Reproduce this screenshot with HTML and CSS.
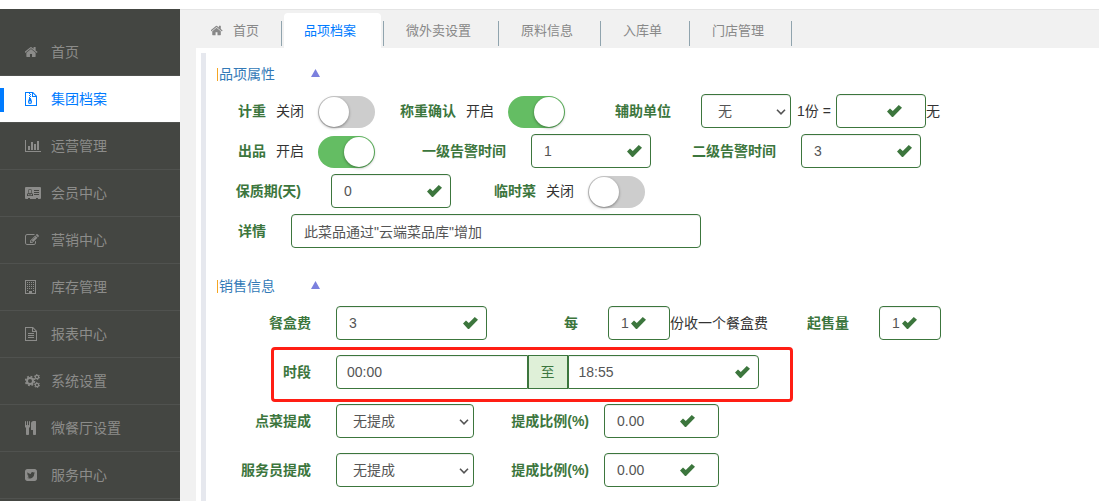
FILE: index.html
```html
<!DOCTYPE html>
<html lang="zh-CN">
<head>
<meta charset="utf-8">
<title>品项档案</title>
<link rel="stylesheet" href="styles.css">
</head>
<body>
<svg class="defs" aria-hidden="true">
  <symbol id="home" viewBox="88 0 1616 1792" preserveAspectRatio="none"><path d="M1408 992v480q0 26-19 45t-45 19h-384v-384h-256v384h-384q-26 0-45-19t-19-45v-480q0-1 .5-3t.5-3l575-474 575 474q1 2 1 6zm223-69l-62 74q-8 9-21 11h-3q-13 0-21-7l-692-577-692 577q-12 8-24 7-13-2-21-11l-62-74q-8-10-7-23.5t11-21.5l719-599q32-26 76-26t76 26l244 204v-195q0-14 9-23t23-9h192q14 0 23 9t9 23v408l219 182q10 8 11 21.5t-7 23.5z"/></symbol>
  <symbol id="check" viewBox="0 0 15 12"><path d="M0 6.500L3 3.500L5.800 6L11.800 0L15 2.800L6 12H5Z"/></symbol>
  <symbol id="caret" viewBox="0 0 10 6"><path d="M1 .8L5 4.800L9 .8" fill="none" stroke="currentColor" stroke-width="1.600"/></symbol>
</svg>
<div class="app">
  <nav class="sidebar">
    <a href="#" class="item"><svg width="13" height="14"><use href="#home"/></svg>首页</a>
    <a href="#" class="item active"><svg width="12" height="14" viewBox="0 0 12 14"><path fill-rule="evenodd" d="M0 0H8L12 4V14H0ZM1 1V13H11V5H7V1ZM8 1.400V4H10.600Z"/><path d="M4 1h1v1H4zM5 2h1v1H5zM4 3h1v1H4zM5 4h1v1H5zM4 5h1v1H4zM4.200 6h1.600L7 9.500Q7.200 12 5 12T3 9.500Z"/><path class="hole" d="M4 9.500h2v1H4z"/></svg>集团档案</a>
    <a href="#" class="item"><svg width="16" height="14" viewBox="0 0 2048 1792"><path d="M640 896v512h-256v-512h256zm384-512v1024h-256v-1024h256zm1024 1152v128h-2048v-1536h128v1408h1920zm-640-896v768h-256v-768h256zm384-384v1152h-256v-1152h256z"/></svg>运营管理</a>
    <a href="#" class="item"><svg width="16" height="14" viewBox="0 0 16 14"><path fill-rule="evenodd" d="M1 1H15Q16 1 16 2V12Q16 13 15 13H13V12H11V13H5V12H3V13H1Q0 13 0 12V2Q0 1 1 1ZM2 10H8V8.500Q8 7 6.500 7Q7 6 7 5Q7 3 5 3T3 5Q3 6 3.500 7Q2 7 2 8.500ZM9 4V5H14V4ZM9 6V7H14V6ZM9 8V9H14V8Z"/><path d="M3.700 3.700h2.600v2.800L5 7.500L3.700 6.500zM3 7.700L5 8.700L7 7.700V9.300H3Z"/></svg>会员中心</a>
    <a href="#" class="item"><svg width="14" height="14" viewBox="0 0 1792 1792"><path d="M888 1184l116-116-152-152-116 116v56h96v96h56zm440-720q-16-16-33 1l-350 350q-17 17-1 33t33-1l350-350q17-17 1-33zm80 594v190q0 119-84.500 203.500t-203.500 84.500h-832q-119 0-203.500-84.500t-84.500-203.500v-832q0-119 84.500-203.500t203.500-84.500h832q63 0 117 25 15 7 18 23 3 17-9 29l-49 49q-14 14-32 8-23-6-45-6h-832q-66 0-113 47t-47 113v832q0 66 47 113t113 47h832q66 0 113-47t47-113v-126q0-13 9-22l64-64q15-15 35-7t20 29zm-96-738l288 288-672 672h-288v-288zm444 132l-92 92-288-288 92-92q28-28 68-28t68 28l152 152q28 28 28 68t-28 68z"/></svg>营销中心</a>
    <a href="#" class="item"><svg width="11" height="14" viewBox="0 0 11 14"><path fill-rule="evenodd" d="M0 0H11V14H0ZM1 1V13H4V11H7V13H10V1Z"/><path d="M2 2h1v1H2zM4 2h1v1H4zM6 2h1v1H6zM8 2h1v1H8zM2 4h1v1H2zM4 4h1v1H4zM6 4h1v1H6zM8 4h1v1H8zM2 6h1v1H2zM4 6h1v1H4zM6 6h1v1H6zM8 6h1v1H8zM2 8h1v1H2zM4 8h1v1H4zM6 8h1v1H6zM8 8h1v1H8zM2 10h1v1H2zM8 10h1v1H8z"/></svg>库存管理</a>
    <a href="#" class="item"><svg width="12" height="14" viewBox="0 0 12 14"><path fill-rule="evenodd" d="M0 0H8L12 4V14H0ZM1 1V13H11V5H7V1ZM8 1.400V4H10.600ZM3 6H9V7H3ZM3 8H9V9H3ZM3 10H9V11H3Z"/></svg>报表中心</a>
    <a href="#" class="item"><svg width="15" height="14" viewBox="0 0 15 14"><circle cx="5" cy="7" r="3" fill="none" stroke="currentColor" stroke-width="2"/><circle cx="5" cy="7" r="4.500" fill="none" stroke="currentColor" stroke-width="1.600" stroke-dasharray="1.800 1.734"/><circle cx="12" cy="3" r="1.700" fill="none" stroke="currentColor" stroke-width="1.200"/><circle cx="12" cy="3" r="2.600" fill="none" stroke="currentColor" stroke-dasharray="1.400 1.320"/><circle cx="12" cy="11" r="1.700" fill="none" stroke="currentColor" stroke-width="1.200"/><circle cx="12" cy="11" r="2.600" fill="none" stroke="currentColor" stroke-dasharray="1.400 1.320"/></svg>系统设置</a>
    <a href="#" class="item"><svg width="11" height="14" viewBox="192 0 1408 1792"><path d="M832 64v640q0 61-35.500 111t-92.500 70v779q0 52-38 90t-90 38h-128q-52 0-90-38t-38-90v-779q-57-20-92.500-70t-35.500-111v-640q0-26 19-45t45-19 45 19 19 45v416q0 26 19 45t45 19 45-19 19-45v-416q0-26 19-45t45-19 45 19 19 45v416q0 26 19 45t45 19 45-19 19-45v-416q0-26 19-45t45-19 45 19 19 45zm768 0v1600q0 52-38 90t-90 38h-128q-52 0-90-38t-38-90v-512h-224q-13 0-22.500-9.500t-9.500-22.500v-800q0-132 94-226t226-94h256q26 0 45 19t19 45z"/></svg>微餐厅设置</a>
    <a href="#" class="item"><svg width="12" height="14" viewBox="128 0 1536 1792"><path d="M1408 610q-56 25-121 34 68-40 93-117-65 38-134 51-61-66-153-66-87 0-148.500 61.500t-61.500 148.500q0 29 5 48-129-7-242-65t-192-155q-29 50-29 106 0 114 91 175-47-1-100-26v2q0 75 50 133.500t123 72.500q-29 8-51 8-13 0-39-4 21 63 74.500 104t121.500 42q-116 90-261 90-26 0-50-3 148 94 322 94 112 0 210-35.500t168-95 120.500-137 75-162 24.500-168.500q0-18-1-27 63-45 105-109zm256-194v960q0 119-84.500 203.500t-203.500 84.500h-960q-119 0-203.500-84.500t-84.500-203.500v-960q0-119 84.500-203.500t203.500-84.500h960q119 0 203.500 84.500t84.500 203.500z"/></svg>服务中心</a>
  </nav>

  <div class="content">
    <ul class="tabs">
      <li><a href="#" class="home"><svg width="12" height="13"><use href="#home"/></svg>首页</a></li>
      <li><a href="#" class="active">品项档案</a></li>
      <li><a href="#">微外卖设置</a></li>
      <li><a href="#">原料信息</a></li>
      <li><a href="#">入库单</a></li>
      <li><a href="#">门店管理</a></li>
    </ul>

    <main class="panel">
      <form class="form">
        <section class="group attrs">
          <h2>品项属性<button type="button" class="fold" aria-label="收起品项属性"></button></h2>
          <div class="row">
            <label class="name w60" for="weigh">计重</label><span class="state">关闭</span><input class="toggle" type="checkbox" id="weigh">
            <label class="name w81" for="confirm">称重确认</label><span class="state">开启</span><input class="toggle" type="checkbox" id="confirm" checked>
            <label class="name w106 far" for="unit">辅助单位</label>
            <span class="field c90"><select class="control" id="unit"><option>无</option></select><svg class="caret" width="10" height="6"><use href="#caret"/></svg></span>
            <label class="ratio" for="ratio">1份 =</label>
            <span class="field c90 inset"><input class="control" type="text" id="ratio"><svg class="ok" width="15" height="12"><use href="#check"/></svg></span>
            <span class="unit">无</span>
          </div>
          <div class="row">
            <label class="name w60" for="out">出品</label><span class="state">开启</span><input class="toggle" type="checkbox" id="out" checked>
            <label class="name w131 mid" for="alarm1">一级告警时间</label>
            <span class="field c120"><input class="control" type="text" id="alarm1" value="1"><svg class="ok" width="15" height="12"><use href="#check"/></svg></span>
            <label class="name w125 mid" for="alarm2">二级告警时间</label>
            <span class="field c120"><input class="control" type="text" id="alarm2" value="3"><svg class="ok" width="15" height="12"><use href="#check"/></svg></span>
          </div>
          <div class="row">
            <label class="name w95 far" for="shelf">保质期(天)</label>
            <span class="field c120"><input class="control" type="text" id="shelf" value="0"><svg class="ok" width="15" height="12"><use href="#check"/></svg></span>
            <label class="name w85" for="temp">临时菜</label><span class="state">关闭</span><input class="toggle" type="checkbox" id="temp">
          </div>
          <div class="row">
            <label class="name w60 mid" for="detail">详情</label>
            <span class="field c410"><input class="control" type="text" id="detail" value="此菜品通过&quot;云端菜品库&quot;增加"></span>
          </div>
        </section>

        <section class="group sales">
          <h2>销售信息<button type="button" class="fold" aria-label="收起销售信息"></button></h2>
          <div class="row">
            <label class="name w105 mid" for="boxfee">餐盒费</label>
            <span class="field c151"><input class="control" type="text" id="boxfee" value="3"><svg class="ok" width="15" height="12"><use href="#check"/></svg></span>
            <label class="name w91 far" for="per">每</label>
            <span class="field c62 inset"><input class="control" type="text" id="per" value="1"><svg class="ok" width="15" height="12"><use href="#check"/></svg></span>
            <span class="unit">份收一个餐盒费</span>
            <label class="name w81 far" for="min">起售量</label>
            <span class="field c62 inset"><input class="control" type="text" id="min" value="1"><svg class="ok" width="15" height="12"><use href="#check"/></svg></span>
          </div>
          <div class="row marked">
            <label class="name w105 mid" for="from">时段</label>
            <span class="range">
              <input class="control" type="text" id="from" value="00:00">
              <label class="addon" for="to">至</label>
              <span class="field"><input class="control" type="text" id="to" value="18:55"><svg class="ok" width="15" height="12"><use href="#check"/></svg></span>
            </span>
          </div>
          <div class="row">
            <label class="name w105 mid" for="dish">点菜提成</label>
            <span class="field c138"><select class="control" id="dish"><option>无提成</option></select><svg class="caret" width="10" height="6"><use href="#caret"/></svg></span>
            <label class="name w115 near" for="dishrate">提成比例(%)</label>
            <span class="field c115 inset"><input class="control" type="text" id="dishrate" value="0.00"><svg class="ok" width="15" height="12"><use href="#check"/></svg></span>
          </div>
          <div class="row">
            <label class="name w105 mid" for="waiter">服务员提成</label>
            <span class="field c138"><select class="control" id="waiter"><option>无提成</option></select><svg class="caret" width="10" height="6"><use href="#caret"/></svg></span>
            <label class="name w115 near" for="waiterrate">提成比例(%)</label>
            <span class="field c115 inset"><input class="control" type="text" id="waiterrate" value="0.00"><svg class="ok" width="15" height="12"><use href="#check"/></svg></span>
          </div>
        </section>
      </form>
    </main>
  </div>
</div>
</body>
</html>
```

FILE: styles.css
```css
*, ::before, ::after { box-sizing: border-box; }

body {
  margin: 0;
  padding-top: 9px;
  background: #fff;
  color: #333;
  font: 14px/20px "Liberation Sans", "Noto Sans CJK SC", sans-serif;
}

a { color: inherit; text-decoration: none; }
svg { fill: currentColor; }
.defs { display: none; }

.app {
  display: flex;
  min-height: calc(100vh - 9px);
}

/* sidebar */
.sidebar {
  flex: none;
  width: 180px;
  padding-top: 20px;
  background: #444642;
  color: #8c8c8a;
}
.item {
  display: grid;
  grid-template-columns: 26px 1fr;
  align-items: center;
  height: 47px;
  padding-left: 25px;
  border-bottom: 1px solid #50524f;
}
.item.active {
  background: linear-gradient(#007bff, #007bff) 0 12px / 4px 24px no-repeat #fff;
  color: #007bff;
}
.hole { fill: #fff; }

/* tabs */
.content {
  flex: 1;
  min-width: 0;
  display: flex;
  flex-direction: column;
  padding-left: 16px;
  border-top: 1px solid #e4e4e4;
  background: #f1f1f1;
}
.tabs {
  display: flex;
  margin: 0;
  padding: 3px 0 0;
  list-style: none;
  color: #888;
  font-size: 13px;
}
.tabs li { display: flex; }
.tabs li::after {
  content: "";
  width: 1px;
  height: 25px;
  margin-top: 8px;
  background: #90a4ae;
}
.tabs a {
  display: flex;
  align-items: center;
  height: 35px;
  margin: 0 2px;
  padding: 0 25px 0 20px;
  border-radius: 4px 4px 0 0;
}
.tabs a.home {
  gap: 10px;
  margin-left: 0;
  padding: 0 20px 0 15px;
}
.tabs a.active { background: #fff; color: #007bff; }

/* form */
.panel {
  flex: 1;
  padding: 5px 0 0 5px;
  background: #fff;
}
.form {
  height: 100%;
  border-left: 5px solid #e6e8ee;
  padding-top: 11px;
}
.group { display: flex; flex-direction: column; }
.attrs { gap: 6px; margin-bottom: 28px; }
.sales { gap: 15px; }

h2 {
  display: flex;
  align-items: center;
  margin: 0 0 0 11px;
  color: #337ab7;
  font-size: 14px;
  font-weight: 400;
}
.attrs h2 { margin-bottom: 4px; }
.sales h2 { margin-bottom: -5px; }
h2::before {
  content: "";
  width: 1px;
  height: 13px;
  margin-right: 1px;
  background: #f5a623;
}
.fold {
  width: 9px;
  height: 8px;
  margin: 0 0 2px 36px;
  padding: 0;
  border: 0;
  background: #7b80de;
  clip-path: polygon(50% 0, 100% 100%, 0 100%);
}

.row {
  display: flex;
  align-items: center;
  height: 34px;
}
.name {
  flex: none;
  margin-right: 10px;
  color: #3c763d;
  font-weight: 700;
  text-align: right;
  white-space: nowrap;
}
.near { margin-right: 15px; }
.mid { margin-right: 25px; }
.far { margin-right: 30px; }
.w60 { width: 60px; }
.w81 { width: 81px; }
.w85 { width: 85px; }
.w91 { width: 91px; }
.w95 { width: 95px; }
.w105 { width: 105px; }
.w106 { width: 106px; }
.w115 { width: 115px; }
.w125 { width: 125px; }
.w131 { width: 131px; }
.c62 { width: 62px; }
.c90 { width: 90px; }
.c115 { width: 115px; }
.c120 { width: 120px; }
.c138 { width: 138px; }
.c151 { width: 151px; }
.c410 { width: 410px; }

.state, .unit { flex: none; white-space: nowrap; }
.state { margin-right: 14px; }
.ratio { flex: none; width: 45px; padding-left: 6px; white-space: nowrap; }

.toggle {
  flex: none;
  align-self: flex-end;
  appearance: none;
  width: 57px;
  height: 32px;
  margin: 0;
  padding: 1px;
  border-radius: 16px;
  background: #cdcdcd;
}
.toggle::before {
  content: "";
  display: block;
  width: 30px;
  height: 30px;
  border-radius: 50%;
  background: #fff;
  box-shadow: 0 1px 3px rgba(0, 0, 0, .4);
}
.toggle:checked { background: #64bd63; }
.toggle:checked::before { margin-left: auto; }

.control {
  width: 100%;
  min-width: 0;
  height: 34px;
  padding: 6px 12px;
  border: 1px solid #3c763d;
  border-radius: 4px;
  background: #fff;
  box-shadow: inset 0 1px 1px rgba(0, 0, 0, .075);
  color: #555;
  font: inherit;
}
select.control {
  appearance: none;
  padding: 6px 16px;
}
.field { flex: none; position: relative; display: flex; }
.ok, .caret {
  position: absolute;
  pointer-events: none;
}
.ok {
  top: 11px;
  right: 9px;
  color: #3c763d;
}
.inset .ok { right: 24px; }
.caret {
  top: 15px;
  right: 5px;
  color: #555;
}

.range {
  display: grid;
  grid-template-columns: 1fr 40px 1fr;
  width: 423px;
}
.range .control { padding: 6px 10px; }
.range > .control { border-radius: 4px 0 0 4px; }
.range .field .control { border-radius: 0 4px 4px 0; }
.addon {
  height: 34px;
  padding: 6px 0;
  border: 1px solid #3c763d;
  background: #dff0d8;
  color: #3c763d;
  text-align: center;
}

/* highlight frame round the time range */
.marked { position: relative; }
.marked::after {
  content: "";
  position: absolute;
  top: -8px;
  left: 65px;
  width: 522px;
  height: 55px;
  border: 3px solid #ff1e14;
  border-radius: 4px;
  pointer-events: none;
}
```
